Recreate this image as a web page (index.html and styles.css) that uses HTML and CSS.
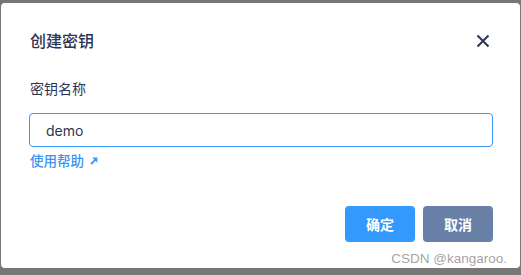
FILE: index.html
```html
<!DOCTYPE html>
<html lang="zh-CN">

<head>
  <meta charset="UTF-8">
  <meta name="viewport" content="width=device-width, initial-scale=1.0">
  <title>创建密钥</title>
  <link rel="stylesheet" href="styles.css">
</head>

<body>
  <div class="dialog">
    <div class="dialog-header">
      <h2 class="dialog-title">创建密钥</h2>
      <button class="close-btn" type="button" aria-label="关闭">
        <svg width="14" height="14" viewBox="0 0 14 14">
          <path d="M1.5 1.5 L12.5 12.5 M12.5 1.5 L1.5 12.5" stroke="#2d3553" stroke-width="2" fill="none" />
        </svg>
      </button>
    </div>

    <div class="dialog-body">
      <label class="field-label" for="keyName">密钥名称</label>
      <input class="text-input" id="keyName" type="text" value="demo">
      <a class="help-link" href="#">使用帮助
        <svg width="8" height="8" viewBox="0 0 8 8">
          <path d="M1 7.2 L5.2 3" stroke="#3a95f5" stroke-width="1.8" />
          <path d="M2.2 0.6 L7.4 0.6 L7.4 5.8 Z" fill="#3a95f5" />
        </svg>
      </a>
    </div>

    <div class="dialog-footer">
      <button class="btn btn-primary" type="button">确定</button>
      <button class="btn btn-secondary" type="button">取消</button>
    </div>

    <div class="watermark">CSDN @kangaroo.</div>
  </div>
</body>

</html>
```

FILE: styles.css
```css
* {
  margin: 0;
  padding: 0;
  box-sizing: border-box;
}

body {
  font-family: Inter, 'Noto Sans CJK SC', sans-serif;
  background: #777777;
  padding: 3px 0 0 1px;
  overflow: hidden;
}

.dialog {
  position: relative;
  width: 519px;
  height: 265px;
  background: white;
  border-radius: 4px;
  display: flex;
  flex-direction: column;
  padding: 0 27px 26px 28px;
}

.dialog-header {
  display: flex;
  align-items: center;
  justify-content: space-between;
  padding-top: 27px;
  height: 49px;
}

.dialog-title {
  color: #2d3553;
  font-size: 16px;
  font-weight: 500;
  line-height: 22px;
  padding-left: 1px;
}

.close-btn {
  border: none;
  background: none;
  width: 16px;
  height: 16px;
  display: flex;
  align-items: center;
  justify-content: center;
  cursor: pointer;
  margin-right: 2px;
}

.dialog-body {
  display: flex;
  flex-direction: column;
  padding-top: 27px;
}

.field-label {
  color: #2d3553;
  font-size: 14px;
  line-height: 20px;
  padding-left: 1px;
  margin-bottom: 14px;
}

.text-input {
  width: 100%;
  height: 34px;
  border: 1px solid #3a95f5;
  border-radius: 4px;
  padding: 0 16px;
  font-family: Inter, sans-serif;
  font-size: 14px;
  color: #2d3553;
  outline: none;
}

.help-link {
  display: flex;
  align-items: center;
  gap: 6px;
  margin-top: 5px;
  padding-left: 1px;
  color: #3a95f5;
  font-size: 13.5px;
  font-weight: 500;
  line-height: 18px;
  text-decoration: none;
}

.dialog-footer {
  margin-top: auto;
  display: flex;
  justify-content: flex-end;
  gap: 8px;
}

.btn {
  width: 70px;
  height: 36px;
  border: none;
  border-radius: 4px;
  color: white;
  font-family: Inter, 'Noto Sans CJK SC', sans-serif;
  font-size: 14px;
  font-weight: 700;
  cursor: pointer;
}

.btn-primary {
  background: #3399fc;
}

.btn-secondary {
  background: #6880a6;
}

.watermark {
  position: absolute;
  right: 13px;
  bottom: 2px;
  font-family: 'Liberation Sans', Arial, sans-serif;
  font-size: 13.5px;
  color: rgba(120, 120, 120, 0.7);
}
```
